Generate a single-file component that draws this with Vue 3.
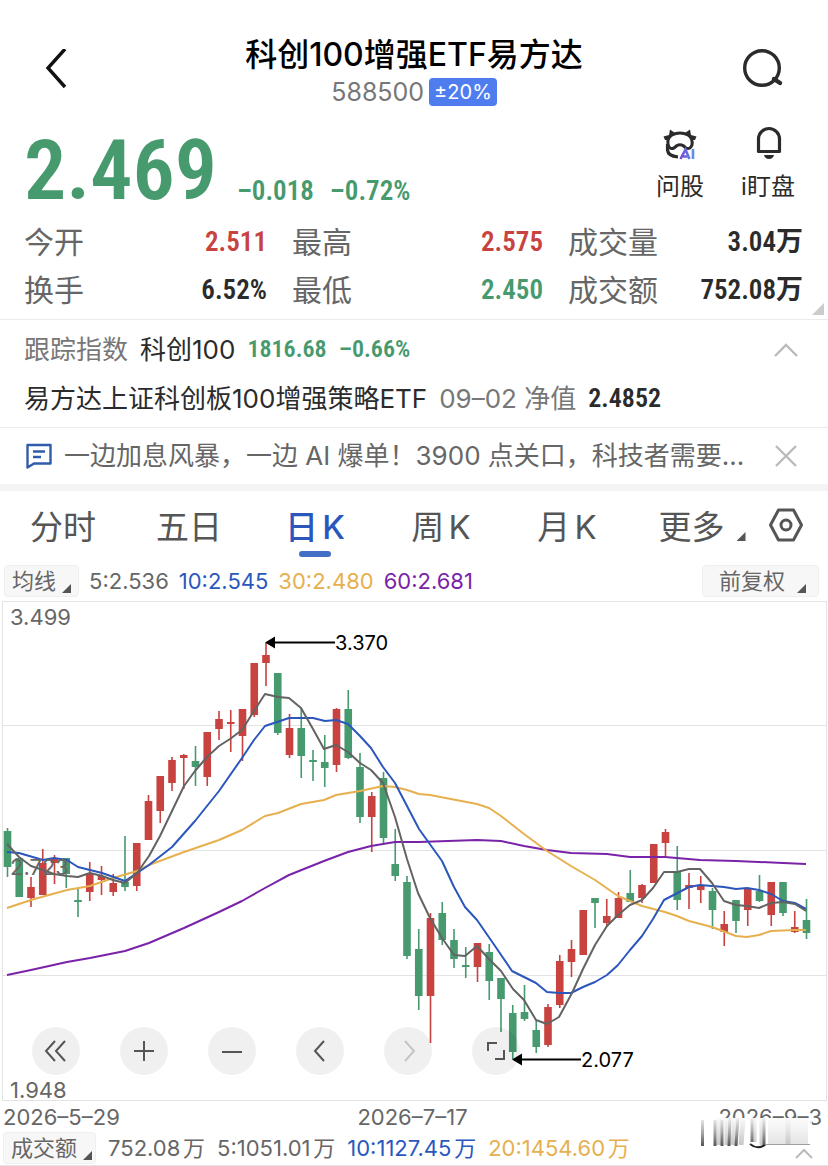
<template>
  <main class="page">
    <header class="header">
      <button class="icon-btn" aria-label="返回">
        <svg width="28" height="44" viewBox="0 3 28 44">
          <path d="M22 3 5 22 22 41" fill="none" stroke="#111" stroke-width="3.4" />
        </svg>
      </button>
      <div class="heading">
        <h1>科创100增强ETF易方达</h1>
        <p class="code">588500 <span class="limit">±20%</span></p>
      </div>
      <button class="icon-btn" aria-label="搜索">
        <svg width="44" height="44" viewBox="0 3 44 44">
          <circle cx="21" cy="22" r="17.3" fill="none" stroke="#2b2b2b" stroke-width="3.4" />
          <path d="M33 33 39 37" stroke="#2b2b2b" stroke-width="4.4" stroke-linecap="round" />
        </svg>
      </button>
    </header>

    <section class="quote">
      <strong class="price">2.469</strong>
      <div class="change"><span>–0.018</span><span>–0.72%</span></div>
      <button class="tool">
        <svg width="40" height="38" viewBox="0 0 40 38">
          <g fill="none" stroke="#2b2b2b" stroke-width="3" stroke-linejoin="round">
            <path d="M12 11Q20 7 28 11Q33 14 32 21Q30 26 26 24L23 21.500Q20 20 17 21.500L14 24Q9 26 8 20Q7 14 12 11Z" />
            <path d="M7.500 20V26Q8 32 18 33" stroke-width="3.200" />
          </g>
          <path
            d="M10 5.500 15 9 11 12 9 16 5 16 3.500 12.500 9 11ZM30 5.500 25 9 29 12 31 16 35 16 36.500 12.500 31 11Z"
            fill="#2b2b2b"
          />
          <defs>
            <linearGradient id="ai" gradientUnits="userSpaceOnUse" x1="20" x2="35" y1="0" y2="0">
              <stop offset="0" stop-color="#7545d8" />
              <stop offset="1" stop-color="#5a9be8" />
            </linearGradient>
          </defs>
          <path d="M20.500 35 25.500 25.500 29.500 35M23 32.500H28M33 25V35" fill="none" stroke="url(#ai)" stroke-width="2.600" />
        </svg>
        <span>问股</span>
      </button>
      <button class="tool">
        <svg width="40" height="38" viewBox="0 0 40 38">
          <path d="M10.500 27.500V15a10.500 10.500 0 0 1 21 0V27.500Z" fill="none" stroke="#2b2b2b" stroke-width="3.200" stroke-linejoin="round" />
          <path d="M16 31H26Q25 35 21 35T16 31Z" fill="#2b2b2b" />
        </svg>
        <span>i盯盘</span>
      </button>
    </section>

    <dl class="stats">
      <div v-for="s in stats" :key="s.label">
        <dt>{{ s.label }}</dt>
        <dd :class="s.tone">{{ s.value }}</dd>
      </div>
    </dl>

    <section class="index">
      <svg class="corner" width="12" height="12" viewBox="0 0 12 12">
        <path d="M12 0V12H0Z" fill="#ccc" />
      </svg>
      <p>
        <span class="muted">跟踪指数</span>
        <span>科创100</span>
        <b class="green">1816.68</b>
        <b class="green">–0.66%</b>
        <button class="icon-btn end" aria-label="收起">
          <svg width="26" height="16" viewBox="0 0 26 16">
            <path d="M2 14 13 3 24 14" fill="none" stroke="#bbb" stroke-width="2.400" />
          </svg>
        </button>
      </p>
      <p>
        <span>易方达上证科创板100增强策略ETF</span>
        <span class="muted">09–02 净值</span>
        <b>2.4852</b>
      </p>
    </section>

    <section class="news">
      <svg width="28" height="28" viewBox="0 0 28 28">
        <path d="M3.500 3H26.500V21.500H10L3.500 25.500Z" fill="none" stroke="#2f5cab" stroke-width="2.400" stroke-linejoin="round" />
        <path d="M9 9.500H21M9 15H17" stroke="#2f5cab" stroke-width="2.400" />
      </svg>
      <a href="#">一边加息风暴，一边 AI 爆单！3900 点关口，科技者需要...</a>
      <button class="icon-btn end" aria-label="关闭">
        <svg width="26" height="26" viewBox="0 0 26 26">
          <path d="M3 3 23 23M23 3 3 23" stroke="#bbb" stroke-width="2.400" />
        </svg>
      </button>
    </section>

    <nav class="tabs">
      <button v-for="t in tabs" :key="t" :class="{ active: t === current }" @click="current = t">{{ t }}</button>
      <button class="more">更多<i class="tri"></i></button>
      <button class="icon-btn" aria-label="设置">
        <svg width="36" height="36" viewBox="0 0 36 36">
          <g fill="none" stroke="#555" stroke-width="3">
            <path d="M10.500 3H25.500L33.500 18 25.500 33H10.500L2.500 18Z" stroke-linejoin="round" />
            <circle cx="18" cy="18" r="5" />
          </g>
        </svg>
      </button>
    </nav>

    <div class="legend">
      <button class="pick">均线<i class="tri"></i></button>
      <span>5:2.536</span>
      <span class="blue">10:2.545</span>
      <span class="yellow">30:2.480</span>
      <span class="purple">60:2.681</span>
      <button class="pick adjust">前复权<i class="tri"></i></button>
    </div>

    <section class="chart">
      <svg class="plot" viewBox="0 600 828 502">
        <rect x="2.500" y="601.500" width="824" height="499" fill="none" stroke="#e3e3e3" />
        <path d="M2 725.500H826M2 850.500H826M2 975.500H826" stroke="#e3e3e3" />
        <g v-for="(c, i) in candles" :key="i" :fill="c[0] ? '#c8423f' : '#469a6e'">
          <rect :x="cx(i) - 0.8" :y="c[1]" width="1.600" :height="c[4] - c[1]" />
          <rect :x="cx(i) - 3.8" :y="c[2]" width="7.600" :height="c[3] - c[2]" />
        </g>
        <g fill="none" stroke-width="2" stroke-linejoin="round">
          <polyline :points="ma60" stroke="#7a22a8" />
          <polyline :points="ma30" stroke="#e6b04f" />
          <polyline :points="ma10" stroke="#2b57bd" />
          <polyline :points="ma5" stroke="#636363" />
        </g>
        <g class="axis">
          <text x="10" y="625">3.499</text>
          <text x="10" y="875">2.723</text>
          <text x="10" y="1098">1.948</text>
        </g>
        <g class="mark">
          <path d="M270 642.500H335M517 1059.500H581" stroke="#000" stroke-width="2" />
          <path d="M265 642.500 275 636.500V648.500ZM512 1059.500 522 1053.500V1065.500Z" />
          <text x="335" y="650">3.370</text>
          <text x="581" y="1067">2.077</text>
        </g>
      </svg>
      <div class="controls">
        <button v-for="b in controls" :key="b.name" :aria-label="b.name" :class="{ off: b.off }">
          <svg width="28" height="28" viewBox="0 0 28 28"><path :d="b.d" /></svg>
        </button>
      </div>
    </section>

    <div class="dates">
      <span>2026–5–29</span>
      <span>2026–7–17</span>
      <span>2026–9–3</span>
      <svg class="smudge" width="112" height="34" viewBox="0 0 112 34">
        <defs>
          <linearGradient id="fade" x1="0" y1="0" x2="0" y2="1">
            <stop offset="0" stop-color="#fff" stop-opacity="0.900" />
            <stop offset="0.500" stop-color="#fff" stop-opacity="0.500" />
            <stop offset="1" stop-color="#fff" stop-opacity="0" />
          </linearGradient>
        </defs>
        <rect x="16" y="0" width="92" height="28" fill="#fff" />
        <rect x="68" y="0" width="40" height="26" fill="#e2e2e2" />
        <g stroke="#c4c4c4" stroke-width="5">
          <path d="M19 0V27M27 0V27M35 0 33 27M43 0 41 27M54 0V24M62 0V27M88 0V26" />
        </g>
        <g stroke="#555" stroke-width="3">
          <path d="M2.500 2V28M15 2V28M22 2V28M30 0 29 28M38 0 36 28M52 0V24M64 0V28" />
        </g>
        <path d="M50 26Q57 32 65 27" fill="none" stroke="#222" stroke-width="2" />
        <path d="M65 26.500H110" stroke="#999" stroke-width="1" />
        <rect width="112" height="28" fill="url(#fade)" />
      </svg>
    </div>

    <div class="legend volume">
      <button class="pick">成交额<i class="tri"></i></button>
      <span>752.08万</span>
      <span>5:1051.01万</span>
      <span class="blue">10:1127.45万</span>
      <span class="yellow">20:1454.60万</span>
      <button class="icon-btn end" aria-label="展开">
        <svg width="20" height="12" viewBox="0 0 20 12">
          <path d="M2 10 10 2 18 10" fill="none" stroke="#bbb" stroke-width="2" />
        </svg>
      </button>
    </div>
  </main>
</template>

<script setup>
import { ref } from "vue";

const stats = [
  { label: "今开", value: "2.511", tone: "red" },
  { label: "最高", value: "2.575", tone: "red" },
  { label: "成交量", value: "3.04万" },
  { label: "换手", value: "6.52%" },
  { label: "最低", value: "2.450", tone: "green" },
  { label: "成交额", value: "752.08万" },
];

const tabs = ["分时", "五日", "日K", "周K", "月K"];
const current = ref("日K");

const controls = [
  { name: "最早", d: "M13 4 4 14 13 24M23 4 14 14 23 24" },
  { name: "放大", d: "M4 14H24M14 4V24" },
  { name: "缩小", d: "M4 15H24" },
  { name: "向左", d: "M18 4 9 14 18 24" },
  { name: "向右", d: "M11 4 20 14 11 24", off: true },
  { name: "全屏", d: "M6 14V6H15M22 13V22H13" },
];

const cx = (i) => 7.5 + i * 11.75;

// [rising, high, body top, body bottom, low]
const candles = [
  [0, 828, 831, 867, 877],
  [0, 858, 858, 897, 897],
  [1, 877, 887, 898, 907],
  [1, 849, 863, 895, 895],
  [1, 855, 858, 863, 884],
  [0, 858, 858, 874, 888],
  [0, 889, 900, 902, 917],
  [1, 862, 873, 892, 901],
  [1, 866, 876, 880, 895],
  [1, 874, 883, 892, 896],
  [0, 836, 882, 887, 891],
  [1, 843, 843, 886, 891],
  [1, 795, 801, 840, 840],
  [1, 776, 776, 811, 823],
  [1, 757, 760, 783, 791],
  [1, 754, 755, 758, 789],
  [0, 746, 761, 767, 786],
  [1, 732, 732, 777, 786],
  [1, 711, 719, 729, 740],
  [1, 710, 722, 724, 752],
  [1, 709, 709, 736, 761],
  [1, 663, 663, 715, 717],
  [1, 643, 655, 663, 686],
  [0, 673, 673, 733, 735],
  [1, 714, 728, 755, 758],
  [0, 708, 728, 756, 778],
  [0, 750, 760, 762, 781],
  [0, 735, 762, 768, 787],
  [1, 708, 709, 765, 772],
  [0, 690, 709, 758, 759],
  [0, 753, 767, 817, 823],
  [1, 792, 796, 817, 852],
  [0, 772, 778, 838, 843],
  [0, 829, 864, 876, 881],
  [0, 876, 882, 956, 959],
  [0, 929, 949, 996, 1010],
  [1, 913, 918, 996, 1043],
  [0, 902, 913, 940, 945],
  [0, 929, 940, 959, 968],
  [0, 947, 965, 967, 978],
  [1, 943, 943, 967, 982],
  [0, 944, 952, 981, 1000],
  [0, 978, 978, 999, 1032],
  [0, 1005, 1013, 1052, 1059],
  [0, 985, 1012, 1019, 1021],
  [0, 1020, 1030, 1047, 1053],
  [1, 1004, 1007, 1045, 1047],
  [1, 955, 961, 1005, 1008],
  [1, 940, 949, 962, 977],
  [1, 910, 910, 955, 955],
  [0, 898, 898, 903, 928],
  [1, 899, 916, 923, 927],
  [1, 892, 898, 918, 918],
  [0, 870, 893, 902, 902],
  [1, 884, 885, 898, 903],
  [1, 844, 844, 883, 883],
  [1, 829, 832, 843, 856],
  [0, 846, 872, 900, 910],
  [1, 873, 885, 888, 909],
  [1, 876, 885, 890, 903],
  [0, 888, 891, 910, 929],
  [1, 911, 924, 932, 946],
  [0, 900, 900, 921, 933],
  [1, 888, 888, 910, 926],
  [0, 875, 891, 901, 902],
  [1, 882, 882, 915, 926],
  [0, 882, 882, 913, 916],
  [1, 911, 927, 932, 933],
  [0, 899, 920, 933, 939],
];

const ma5 =
  "7,844 19,857 31,866 43,870 54,874 67,876 78,877 90,873 102,876 113,880 125,883 137,873 149,856 160,836 172,811 184,786 195,771 207,757 219,746 230,739 242,730 254,711 265,694 278,697 289,698 301,708 313,729 324,749 336,745 348,752 360,763 371,770 383,783 395,817 407,859 418,893 430,918 442,938 454,955 465,956 477,946 489,959 501,971 513,989 524,1000 536,1020 547,1024 559,1017 572,993 583,969 595,945 607,926 618,915 630,905 642,900 653,888 664,872 677,872 689,869 700,869 712,883 724,901 736,905 747,906 759,908 771,903 783,902 795,904 806,911";
const ma10 =
  "7,852 19,853 43,860 54,858 67,860 78,867 102,873 125,881 137,873 149,865 172,847 195,821 219,791 242,758 254,740 265,726 289,718 313,718 325,721 336,720 348,724 360,736 371,748 383,767 395,783 419,829 442,861 454,887 465,907 477,920 495,946 512,971 524,977 536,983 547,992 559,993 571,993 583,987 595,982 607,975 618,965 630,950 642,936 653,919 664,900 689,887 700,885 724,887 736,889 747,888 759,890 771,894 783,901 795,903 806,909";
const ma30 =
  "7,908 31,900 67,890 90,886 113,878 137,871 149,865 184,852 219,840 242,830 265,816 278,813 301,804 324,800 336,795 360,791 383,786 395,787 407,790 419,794 430,795 477,804 489,808 501,816 524,834 547,851 571,866 595,880 618,896 642,906 665,912 677,916 689,921 712,927 736,936 747,937 759,935 771,931 795,930 806,930";
const ma60 =
  "7,975 31,970 67,962 90,958 125,951 149,943 184,928 219,912 242,901 265,888 289,875 324,861 348,852 371,846 395,842 419,842 477,840 501,841 524,846 547,850 571,853 607,854 630,857 665,857 700,860 736,861 783,863 806,864";
</script>

<style>
body {
  margin: 0;
  background: #fff;
}
</style>

<style scoped>
* {
  box-sizing: border-box;
  margin: 0;
  padding: 0;
}

.page {
  font-family: Inter, "Noto Sans CJK SC", sans-serif;
  color: #2b2b2b;
  background: #fff;
}

button {
  border: none;
  background: none;
  font: inherit;
  color: inherit;
}

svg {
  display: block;
}

a {
  color: inherit;
  text-decoration: none;
}

.header {
  display: grid;
  grid-template-columns: 44px 1fr 44px;
  align-items: center;
  padding: 34px 43px 0;
}

.heading {
  text-align: center;
}

h1 {
  font-size: 32px;
  line-height: 42px;
  font-weight: 500;
  color: #000;
}

.code {
  display: flex;
  justify-content: center;
  align-items: center;
  gap: 5px;
  font-size: 25px;
  line-height: 32px;
  color: #777;
}

.limit {
  padding: 0 5px;
  border-radius: 4px;
  background: #4f7df0;
  color: #fff;
  font-size: 20px;
  line-height: 28px;
}

.quote {
  display: flex;
  align-items: flex-end;
  padding: 12px 16px 0 24px;
  height: 98px;
  color: #469a6e;
}

.price,
.change,
dd,
b {
  font-family: "Roboto Condensed", "Noto Sans CJK SC", sans-serif;
  font-weight: 600;
}

.price {
  font-size: 84px;
  line-height: 70px;
}

.change {
  display: flex;
  gap: 16px;
  flex: 1;
  margin-left: 20px;
  font-size: 27px;
  line-height: 30px;
}

.tool {
  display: grid;
  justify-items: center;
  row-gap: 6px;
  width: 88px;
  color: #2b2b2b;
  font-size: 24px;
  line-height: 38px;
}

.stats {
  display: grid;
  grid-template-columns: 243px 251px 1fr;
  column-gap: 25px;
  padding: 12px 25px 5px 24px;
  border-bottom: 1px solid #ebebeb;
}

.stats div {
  display: flex;
  justify-content: space-between;
  font-size: 30px;
  line-height: 48px;
}

dt {
  color: #666;
}

dd {
  font-size: 27px;
}

.muted {
  color: #777;
}

.red {
  color: #c8423f;
}

.green {
  color: #469a6e;
}

.index {
  position: relative;
  padding: 5px 29px 4px 24px;
  border-bottom: 1px solid #ebebeb;
}

.corner {
  position: absolute;
  right: 4px;
  top: -17px;
}

.index p {
  display: flex;
  align-items: center;
  gap: 12px;
  font-size: 26px;
  line-height: 49px;
}

.index .green {
  font-size: 24px;
}

.end {
  margin-left: auto;
}

.news {
  display: flex;
  align-items: center;
  gap: 12px;
  padding: 0 29px 0 24px;
  border-bottom: 7px solid #f4f4f4;
  font-size: 26px;
  line-height: 56px;
  color: #666;
}

.news a {
  white-space: nowrap;
}

.tabs {
  display: grid;
  grid-template-columns: repeat(6, 1fr) 48px;
  align-items: center;
  padding: 0 24px 6px 0;
  height: 74px;
  font-size: 33px;
  color: #555;
  text-autospace: normal;
}

.tabs button {
  position: relative;
}

.tabs .active {
  color: #2b57bd;
  font-weight: 500;
}

.tabs .active::after {
  content: "";
  position: absolute;
  left: 50%;
  bottom: -8px;
  width: 32px;
  height: 6px;
  margin-left: -16px;
  border-radius: 3px;
  background: #426fc5;
}

.tabs .icon-btn {
  justify-self: end;
}

.more {
  display: flex;
  justify-content: center;
  align-items: flex-end;
  gap: 12px;
  padding-left: 18px;
}

.tri {
  width: 9px;
  height: 9px;
  background: #555;
  clip-path: polygon(100% 0, 100% 100%, 0 100%);
}

.more .tri {
  margin-bottom: 8px;
}

.legend {
  display: flex;
  align-items: center;
  gap: 10px;
  padding: 0 9px 3px 4px;
  font-size: 22px;
  line-height: 30px;
  color: #666;
  text-autospace: normal;
}

.pick {
  display: flex;
  align-items: flex-end;
  gap: 6px;
  padding: 0 7px;
  border: 1px solid #efefef;
  border-radius: 4px;
  background: #f7f7f7;
}

.pick .tri {
  margin-bottom: 3px;
}

.adjust {
  gap: 12px;
  margin-left: auto;
  padding: 0 12px 0 16px;
}

.blue {
  color: #2b57bd;
}

.yellow {
  color: #e6b04f;
}

.purple {
  color: #7a22a8;
}

.chart {
  position: relative;
}

.plot {
  width: 100%;
}

.axis {
  font-size: 22px;
  fill: #666;
}

.mark {
  font-size: 20px;
  fill: #000;
}

.controls {
  position: absolute;
  left: 32px;
  bottom: 27px;
  display: flex;
  gap: 40px;
}

.controls button {
  display: grid;
  place-items: center;
  width: 48px;
  height: 48px;
  border-radius: 50%;
  background: rgba(0, 0, 0, 0.06);
}

.controls path {
  fill: none;
  stroke: #555;
  stroke-width: 2;
}

.controls .off path {
  stroke: #c4c4c4;
}

.dates {
  position: relative;
  display: grid;
  grid-template-columns: 1fr auto 1fr;
  padding: 0 6px 0 3px;
  font-size: 22px;
  line-height: 30px;
  color: #666;
}

.dates span:nth-child(3) {
  text-align: right;
}

.smudge {
  position: absolute;
  right: 16px;
  top: 16px;
}

.volume {
  gap: 12px;
  padding: 0 14px 1px 3px;
  border-bottom: 1px solid #e3e3e3;
}

.volume .pick {
  padding-right: 3px;
}

.volume .end {
  align-self: flex-end;
  padding-bottom: 4px;
}
</style>
